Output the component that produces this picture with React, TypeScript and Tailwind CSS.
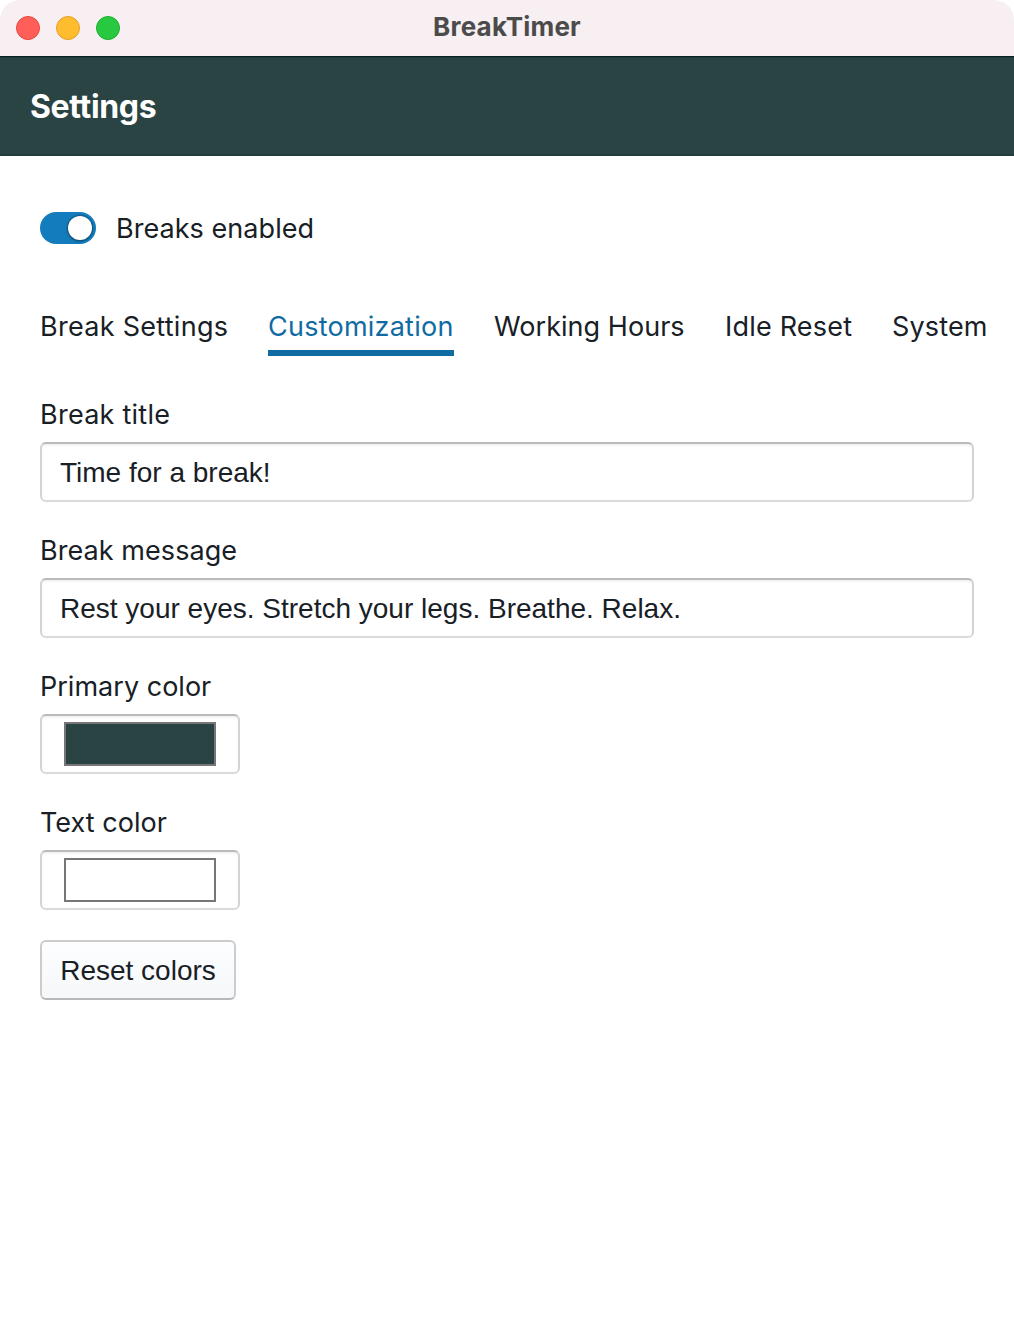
import React from "react";

const tabs = [
  { label: "Break Settings", className: "w-[188px] tracking-[0.28px]" },
  { label: "Customization", className: "w-[186px] tracking-[0.24px]" },
  { label: "Working Hours", className: "w-[191px] tracking-[0.04px]" },
  { label: "Idle Reset", className: "w-[127px] tracking-[0.2px]" },
  { label: "System", className: "w-[96px] tracking-[0.15px]" },
];

const fieldFrame =
  "h-[60px] rounded-[6px] border-2 border-[#dadada] border-t-[#b9b9b9] border-x-[#d2d3d4] bg-white shadow-[inset_0_2px_2px_rgba(16,22,26,0.05)]";

function Label({ children, className }: { children: React.ReactNode; className: string }) {
  return <div className={`mb-[9px] h-9 text-[27px] leading-9 ${className}`}>{children}</div>;
}

function TextField({ label, labelClass, value }: { label: string; labelClass: string; value: string }) {
  return (
    <div className="mb-5 h-[116px] pt-[11px]">
      <Label className={labelClass}>{label}</Label>
      <div
        className={`${fieldFrame} flex items-center px-[18px] pt-[2px] font-['Liberation_Sans',Arial,sans-serif] text-[28px]`}
      >
        <span className="whitespace-pre">{value}</span>
      </div>
    </div>
  );
}

function ColorField({ label, swatch }: { label: string; swatch: string }) {
  return (
    <div className="mb-5 h-[116px] pt-[11px]">
      <Label className="tracking-[0.02px]">{label}</Label>
      <div className={`${fieldFrame} w-[200px] px-[22px] py-[6px]`}>
        <div className={`h-11 border-2 border-[#767676] ${swatch}`} />
      </div>
    </div>
  );
}

export default function App() {
  return (
    <div className="h-[1320px] w-[1014px] overflow-hidden rounded-[20px] bg-white font-['Inter',sans-serif] text-[#182026]">
      <header className="relative flex h-14 items-center bg-[#f7eff2] px-4">
        <div className="flex gap-4">
          <span className="size-6 rounded-full border border-[#e8463f] bg-[#ff5f58]" />
          <span className="size-6 rounded-full border border-[#e2a02b] bg-[#febc2e]" />
          <span className="size-6 rounded-full border border-[#1fad30] bg-[#28c940]" />
        </div>
        <div className="absolute inset-x-0 top-0 text-center text-[26px] leading-[54px] font-bold tracking-[0.2px] text-[#4b4b4b]">
          BreakTimer
        </div>
      </header>

      <div className="flex h-[100px] items-center border-t border-b-2 border-t-[#08201f] border-b-[#243c3b] bg-[#2a4343] px-[30px] pt-[3px] shadow-[inset_0_1px_0_#1f3a3a]">
        <h1 className="text-[32px] leading-10 font-bold tracking-[-0.35px] text-white">Settings</h1>
      </div>

      <main className="px-10 pt-[54px]">
        <div className="flex h-9 items-center">
          <span className="flex h-8 w-14 items-center justify-end rounded-full bg-[#137cbd] pr-1">
            <span className="size-6 rounded-full bg-white shadow-[0_0_0_1.5px_rgba(16,22,26,0.2),0_1px_2px_1px_rgba(16,22,26,0.2)]" />
          </span>
          <span className="ml-5 pt-[2px] text-[27px] leading-9 tracking-[0.05px]">Breaks enabled</span>
        </div>

        <nav className="mt-[50px] flex h-[60px] gap-10 text-[27px] leading-[62px] whitespace-nowrap">
          {tabs.map((tab, i) => (
            <div
              key={tab.label}
              className={`h-[60px] shrink-0 ${tab.className} ${i === 1 ? "border-b-6 border-[#106ba3] text-[#106ba3]" : ""}`}
            >
              {tab.label}
            </div>
          ))}
        </nav>

        <div className="flex flex-col pt-[30px]">
          <TextField label="Break title" labelClass="tracking-[0.25px]" value="Time for a break!" />
          <TextField
            label="Break message"
            labelClass="tracking-[0.06px]"
            value="Rest your eyes. Stretch your legs. Breathe. Relax."
          />
          <ColorField label="Primary color" swatch="bg-[#2a4343]" />
          <ColorField label="Text color" swatch="bg-white" />
        </div>

        <button className="mt-[10px] flex h-[60px] w-[196px] items-center justify-center rounded-[6px] border-2 border-[#cbcccd] border-b-[#b7b8b9] bg-gradient-to-b from-[#fdfeff] to-[#f6f7f9] pt-[2px] font-['Liberation_Sans',Arial,sans-serif] text-[28px] whitespace-nowrap">
          Reset colors
        </button>
      </main>
    </div>
  );
}
